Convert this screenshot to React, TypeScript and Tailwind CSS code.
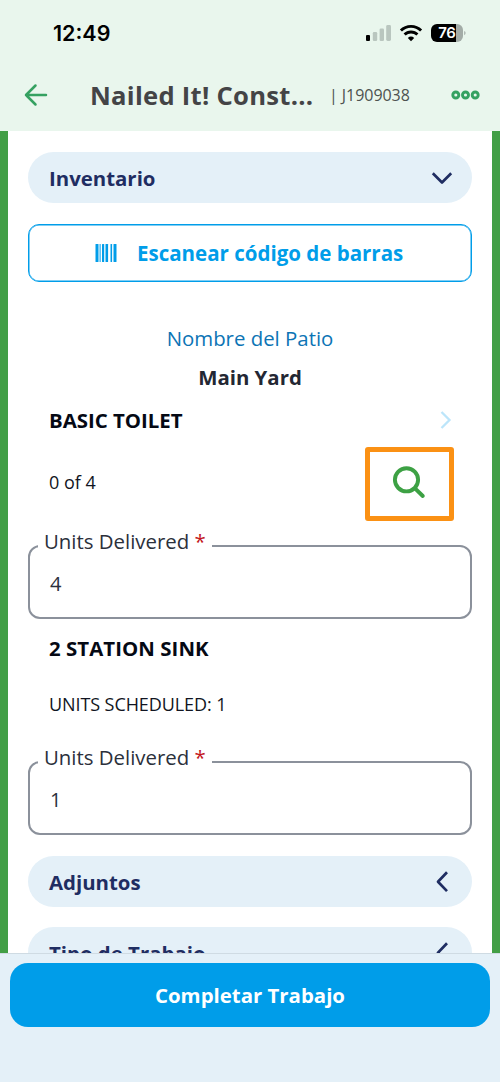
import React from 'react';

const ink = '#1f2d62';

function StatusIcons() {
  return (
    <svg width="102" height="20" viewBox="0 0 102 20" className="block">
      {/* Signal */}
      <rect x="2" y="12" width="4" height="6" rx="1" fill="#000" />
      <rect x="8.8" y="9" width="4.4" height="9" rx="1.2" fill="#b9c6bf" />
      <rect x="15.6" y="5.6" width="4.4" height="12.4" rx="1.2" fill="#b9c6bf" />
      <rect x="22.2" y="2" width="4.8" height="16" rx="1.4" fill="#b9c6bf" />
      {/* Wifi */}
      <g fill="none" stroke="#000" strokeWidth="2.9">
        <path d="M36.9 7.6a14.2 14.2 0 0 1 20.2 0" />
        <path d="M40.6 11.6a9 9 0 0 1 12.8 0" />
      </g>
      <path d="M47 18.2l-3.2-3.3a4.7 4.7 0 0 1 6.4 0z" fill="#000" />
      {/* Battery */}
      <path d="M73 1h19v18H73a6 6 0 0 1-6-6V7a6 6 0 0 1 6-6z" fill="#000" />
      <path d="M92 1h1a6 6 0 0 1 6 6v6a6 6 0 0 1-6 6h-1z" fill="#a3aca7" />
      <path d="M100.2 8v4.2a2.3 2.3 0 0 0 0-4.200z" fill="#a3aca7" />
      <text x="82.8" y="15.4" textAnchor="middle" fill="#fff" fontSize="15" fontWeight="600" fontFamily="Inter, sans-serif" letterSpacing="-0.5">76</text>
    </svg>
  );
}

function Chevron({ open }: { open?: boolean }) {
  return (
    <svg width="22" height="22" viewBox="0 0 22 22" fill="none" stroke={ink} strokeWidth="2.7" strokeLinejoin="round">
      {open ? <path d="M1.8 6.3l9.2 9.2 9.2-9.2" /> : <path d="M16 1.3l-9 9.4 9 9.4" />}
    </svg>
  );
}

function Section({ title, open }: { title: string; open?: boolean }) {
  return (
    <div className="flex h-[51px] shrink-0 items-center justify-between rounded-full bg-[#e4f0f8] pr-[19px] pl-[21px] text-[20.4px] font-bold text-[#1f2d62]">
      <span className="pt-[2px]">{title}</span>
      <Chevron open={open} />
    </div>
  );
}

function UnitsField({ value }: { value: string }) {
  return (
    <fieldset className="h-[87px] shrink-0 rounded-[12px] border-2 border-[#8b919b] pl-[8px]">
      <legend className="h-[28px] px-[6px] text-[20.4px] leading-[18px] whitespace-nowrap text-[#2b303b]">
        Units Delivered <span className="text-[#c4161c]">*</span>
      </legend>
      <div className="pt-[10px] pl-[12px] text-[20px] leading-[28px] text-[#2b303b]">{value}</div>
    </fieldset>
  );
}

export default function App() {
  return (
    <div className="flex h-[1082px] w-[500px] flex-col overflow-hidden bg-white font-['Open_Sans',sans-serif]">
      {/* Header */}
      <header className="h-[131px] shrink-0 bg-[#e9f6ed]">
        <div className="flex h-[66px] items-center justify-between pr-[34px] pl-[53px]">
          <span className="pt-[1px] font-['Inter',sans-serif] text-[21.5px] font-semibold text-black">12:49</span>
          <StatusIcons />
        </div>
        <div className="flex h-[58px] items-center">
          <svg width="24" height="24" viewBox="0 0 24 24" className="ml-[24px]" fill="none" stroke="#35a161" strokeWidth="2.5" strokeLinecap="round" strokeLinejoin="round">
            <path d="M22 12H2M11.5 2.5L2 12l9.5 9.5" />
          </svg>
          <h1 className="ml-[42px] w-[226px] pt-[2px] text-[25.6px] font-bold tracking-[0.28px] whitespace-nowrap text-[#444446]">Nailed It! Const...</h1>
          <span className="ml-[13px] w-[101px] text-[16px] tracking-[-0.05px] whitespace-nowrap text-[#4d5250]">| J1909038</span>
          <svg width="30" height="12" viewBox="0 0 30 12" className="ml-[20px]" fill="none" stroke="#35a161" strokeWidth="2.9">
            <circle cx="5.8" cy="6" r="3" />
            <circle cx="15.5" cy="6" r="3" />
            <circle cx="25.2" cy="6" r="3" />
          </svg>
        </div>
      </header>

      {/* Job content */}
      <main className="flex h-[822px] shrink-0 flex-col overflow-hidden border-x-8 border-[#429f46] px-[20px] pt-[21px]">
        <Section title="Inventario" open />

        <button className="mt-[21px] flex h-[58px] shrink-0 items-center rounded-[11px] border border-[#009de9] pl-[66px] text-[20.5px] font-bold text-[#009de9] shadow-[inset_0_0_0_0.5px_#009de9]">
          <svg width="22" height="18" viewBox="0 0 22 18" fill="#009de9">
            <rect x="0.5" width="3" height="18" rx="0.5" />
            <rect x="4.6" width="1" height="18" />
            <rect x="7" width="2.2" height="18" rx="0.5" />
            <rect x="10.5" width="2.6" height="18" rx="0.5" />
            <rect x="15.5" width="1.6" height="18" rx="0.5" />
            <rect x="18.5" width="3" height="18" rx="0.5" />
          </svg>
          <span className="ml-[20px] pt-px whitespace-nowrap">Escanear código de barras</span>
        </button>

        <div className="mt-[42px] h-[28px] shrink-0 text-center text-[20.4px] leading-[28px] text-[#0c74b5]">Nombre del Patio</div>
        <div className="mt-[11px] h-[28px] shrink-0 text-center text-[20.4px] leading-[28px] font-bold text-[#232733]">Main Yard</div>

        <div className="mt-[15px] flex h-[28px] shrink-0 items-center justify-between pr-[20px] pl-[21px]">
          <span className="text-[20.4px] leading-[28px] font-bold text-[#050914]">BASIC TOILET</span>
          <svg width="12" height="18" viewBox="0 0 12 18" fill="none" stroke="#bce5fa" strokeWidth="2.3">
            <path d="M1.5 1l8 8-8 8" />
          </svg>
        </div>

        <div className="mt-[13px] flex h-[74px] shrink-0 items-center justify-between pr-[18px] pl-[21px]">
          <span className="pb-[4px] text-[18px] text-[#111522]">0 of 4</span>
          <div className="flex h-[74px] w-[89px] items-center justify-center rounded-[3px] border-[5px] border-[#fb9114]">
            <svg width="34" height="34" viewBox="0 0 34 34" className="mr-[1px] mb-[5px]" fill="none" stroke="#3da144" strokeWidth="3.9">
              <circle cx="14.5" cy="14.8" r="11.6" />
              <path d="M23 23.3l7.800 7.7" strokeLinecap="round" />
            </svg>
          </div>
        </div>

        <div className="mt-[11px] shrink-0">
          <UnitsField value="4" />
        </div>

        <div className="mt-[15px] h-[28px] shrink-0 pl-[21px] text-[20.4px] leading-[28px] font-bold tracking-[0.06px] text-[#050914]">2 STATION SINK</div>
        <div className="mt-[28px] h-[28px] shrink-0 pl-[21px] text-[18px] leading-[28px] tracking-[-0.09px] text-[#111522]">UNITS SCHEDULED: 1</div>

        <div className="mt-[30px] shrink-0">
          <UnitsField value="1" />
        </div>

        <div className="mt-[21px] flex shrink-0 flex-col gap-[20px]">
          <Section title="Adjuntos" />
          <Section title="Tipo de Trabajo" />
        </div>
      </main>

      {/* Bottom action */}
      <footer className="flex-1 border-t border-[#cfdbe3] bg-[#e4f0f8] px-[10px] pt-[9px]">
        <button className="h-[64px] w-full rounded-[18px] bg-[#009de9] text-[20.4px] font-bold text-white">Completar Trabajo</button>
      </footer>
    </div>
  );
}
